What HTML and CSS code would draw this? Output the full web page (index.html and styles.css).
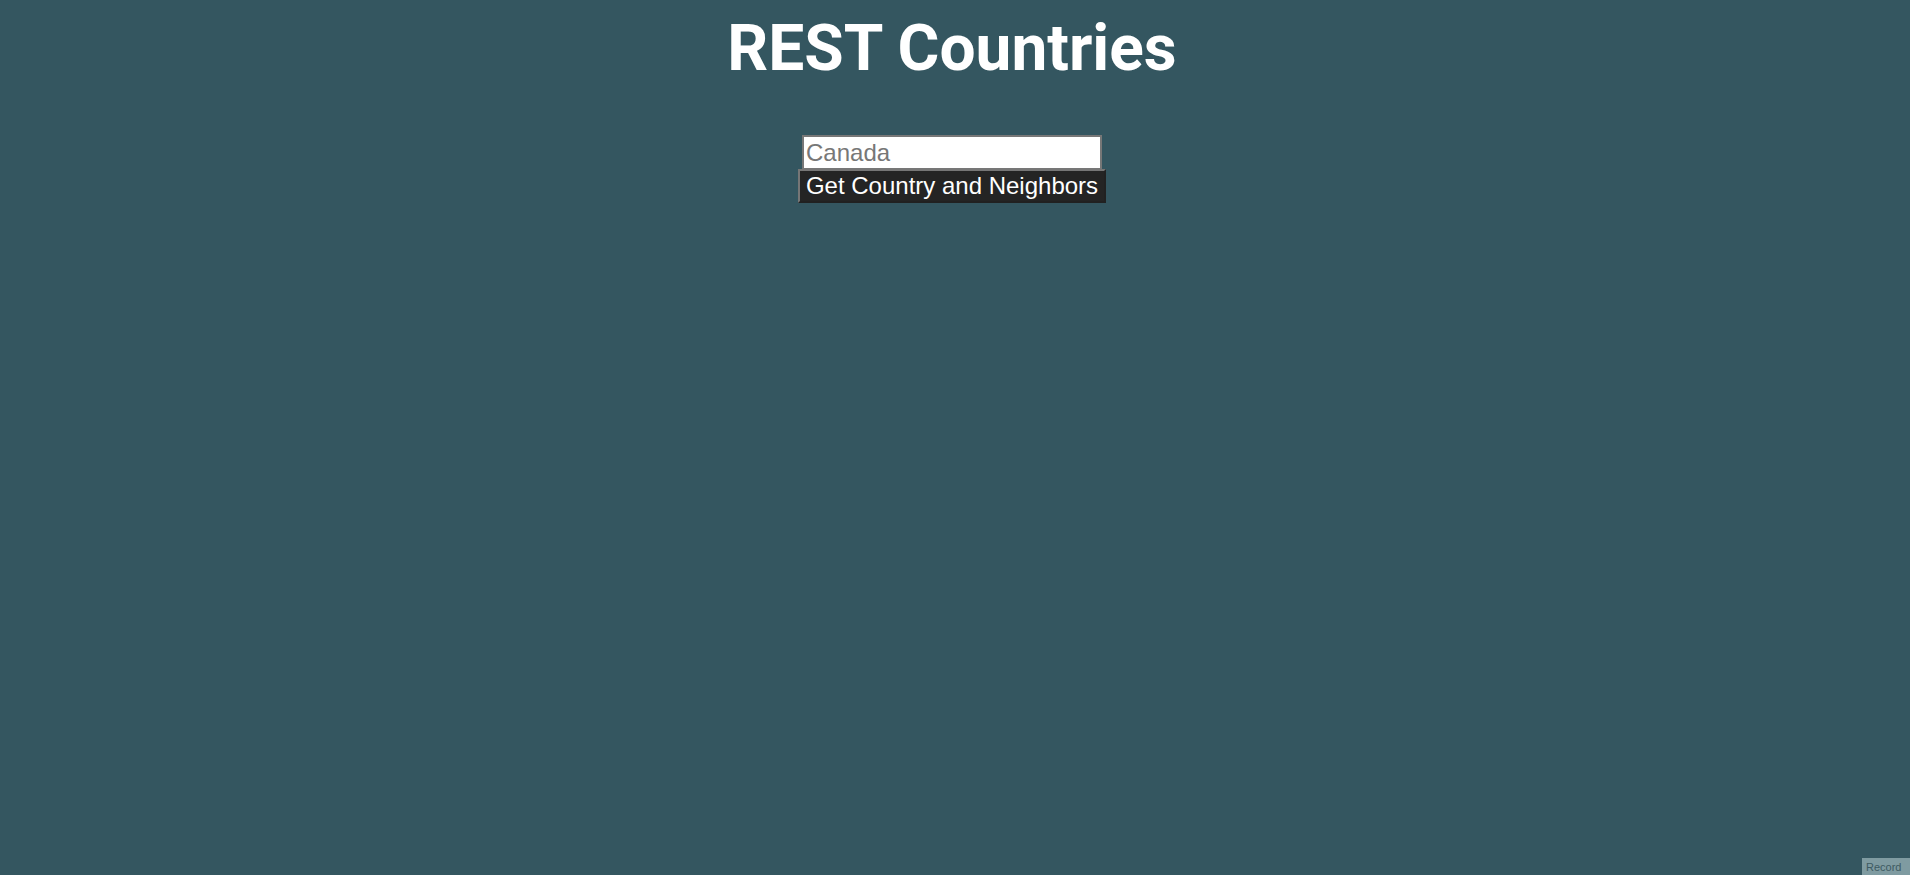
FILE: index.html
```html
<!DOCTYPE html>
<html>
<head>
<meta charset="utf-8">
<title>REST Countries</title>
<link rel="stylesheet" href="styles.css">
</head>
<body>
<main class="app">
  <h1 class="title">REST Countries</h1>
  <form class="search">
    <input class="search-input" type="text" placeholder="Canada">
    <button class="search-btn" type="button">Get Country and Neighbors</button>
  </form>
</main>
<div class="record">Record</div>
</body>
</html>
```
FILE: styles.css
```css
html, body {
  margin: 0;
  height: 100%;
}
body {
  background: #345660;
  font-family: "Liberation Sans", Arial, sans-serif;
  overflow: hidden;
}
.app {
  display: flex;
  flex-direction: column;
  align-items: center;
  padding-right: 6px;
}
.title {
  font-family: Roboto, sans-serif;
  font-weight: 700;
  font-size: 64px;
  line-height: 1;
  color: #fff;
  margin: 17px 0 0;
}
.search {
  display: flex;
  flex-direction: column;
  align-items: center;
  margin-top: 54px;
}
.search-input {
  box-sizing: border-box;
  width: 300px;
  height: 34px;
  border: 2px solid #777;
  border-bottom-width: 1px;
  padding: 0 2px;
  font-family: "Liberation Sans", Arial, sans-serif;
  font-size: 24px;
  color: #333;
  background: #fff;
  outline: none;
}
.search-input::placeholder {
  color: #777;
}
.search-btn {
  box-sizing: border-box;
  width: 308px;
  height: 34px;
  background: #242424;
  color: #fff;
  border: 2px outset #767676;
  font-family: "Liberation Sans", Arial, sans-serif;
  font-size: 24px;
  line-height: 1;
  padding: 0 4px;
  white-space: nowrap;
  cursor: pointer;
}
.record {
  position: fixed;
  right: 0;
  bottom: 0;
  width: 48px;
  height: 17px;
  background: #7f9ba1;
  color: #3d5a62;
  font-size: 11px;
  line-height: 13px;
  padding: 3px 0 0 4px;
  box-sizing: border-box;
  white-space: nowrap;
}
```
